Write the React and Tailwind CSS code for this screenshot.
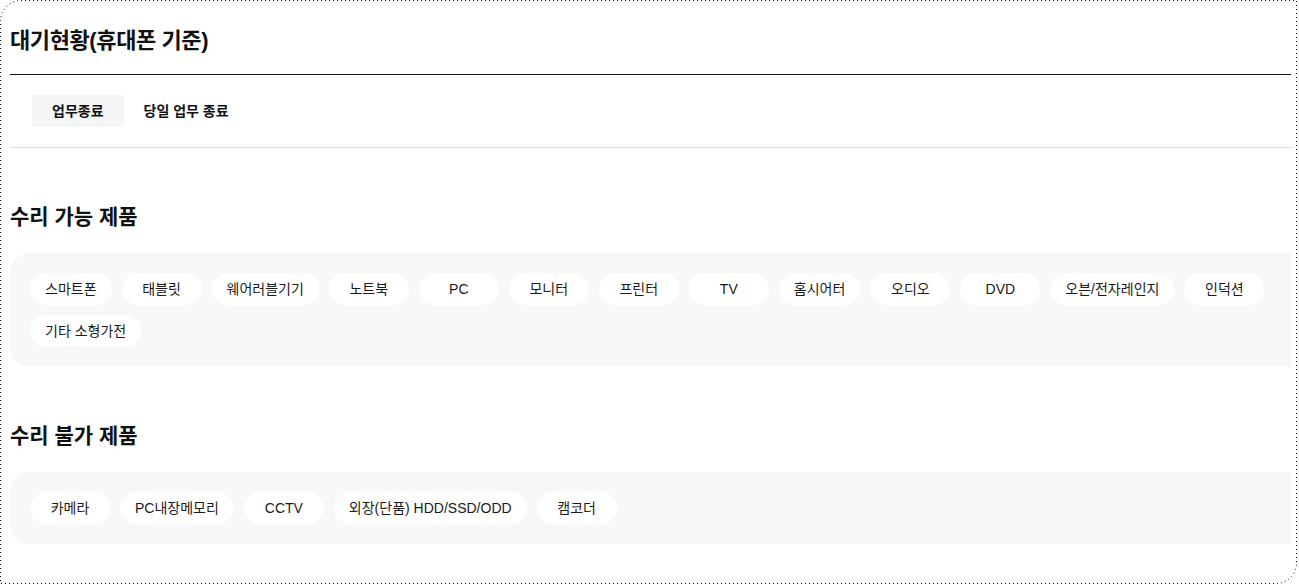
import React from 'react';

const fixable = ['스마트폰', '태블릿', '웨어러블기기', '노트북', 'PC', '모니터', '프린터', 'TV', '홈시어터', '오디오', 'DVD', '오븐/전자레인지', '인덕션', '기타 소형가전'];
const notFixable = ['카메라', 'PC내장메모리', 'CCTV', '외장(단품) HDD/SSD/ODD', '캠코더'];

const ProductBox = ({ title, items }) => (
  <section className="mt-[55px]">
    <h2 className="text-[21px] leading-[28px] font-bold text-[#111]">{title}</h2>
    <div className="mt-[22px] flex flex-wrap gap-[10px] rounded-[20px] bg-[#f8f8f8] p-5">
      {items.map((item) => (
        <span
          key={item}
          className="flex h-8 min-w-[80px] items-center justify-center rounded-full bg-white px-[15px] text-[14px] text-[#1a1a1a] whitespace-nowrap"
        >
          {item}
        </span>
      ))}
    </div>
  </section>
);

const App = () => {
  return (
    <div
      className="relative h-[585px] w-[1299px] overflow-hidden bg-white"
      style={{ fontFamily: '"Liberation Sans", "Noto Sans CJK KR", sans-serif' }}
    >
      <div className="h-full w-[1291px] overflow-hidden">
        <div className="w-[1330px] pl-[10px]">
          <div className="border-b border-[#111] pt-[25px] pb-[17px]">
            <h1 className="text-[22px] leading-[32px] font-bold tracking-[-0.4px] text-[#111]">대기현황(휴대폰 기준)</h1>
          </div>

          <div className="flex border-b border-[#ddd] py-5 pl-[22px]">
            <button className="h-8 rounded bg-[#f4f5f7] px-5 text-[14px] font-semibold text-[#111]">업무종료</button>
            <button className="h-8 rounded px-5 text-[14px] font-semibold text-[#111]">당일 업무 종료</button>
          </div>

          <ProductBox title="수리 가능 제품" items={fixable} />
          <ProductBox title="수리 불가 제품" items={notFixable} />
        </div>
      </div>

      {/* dotted frame */}
      <svg className="pointer-events-none absolute inset-0" width="1299" height="585">
        <path
          d="M0.5 21 A20.5 20.5 0 0 1 21 0.5 H1296.5 V563 A20.5 20.5 0 0 1 1276 583.5 H0.5 Z"
          fill="none"
          stroke="#000"
          strokeWidth="1"
          strokeDasharray="1 3"
        />
      </svg>
    </div>
  );
};

export default App;
